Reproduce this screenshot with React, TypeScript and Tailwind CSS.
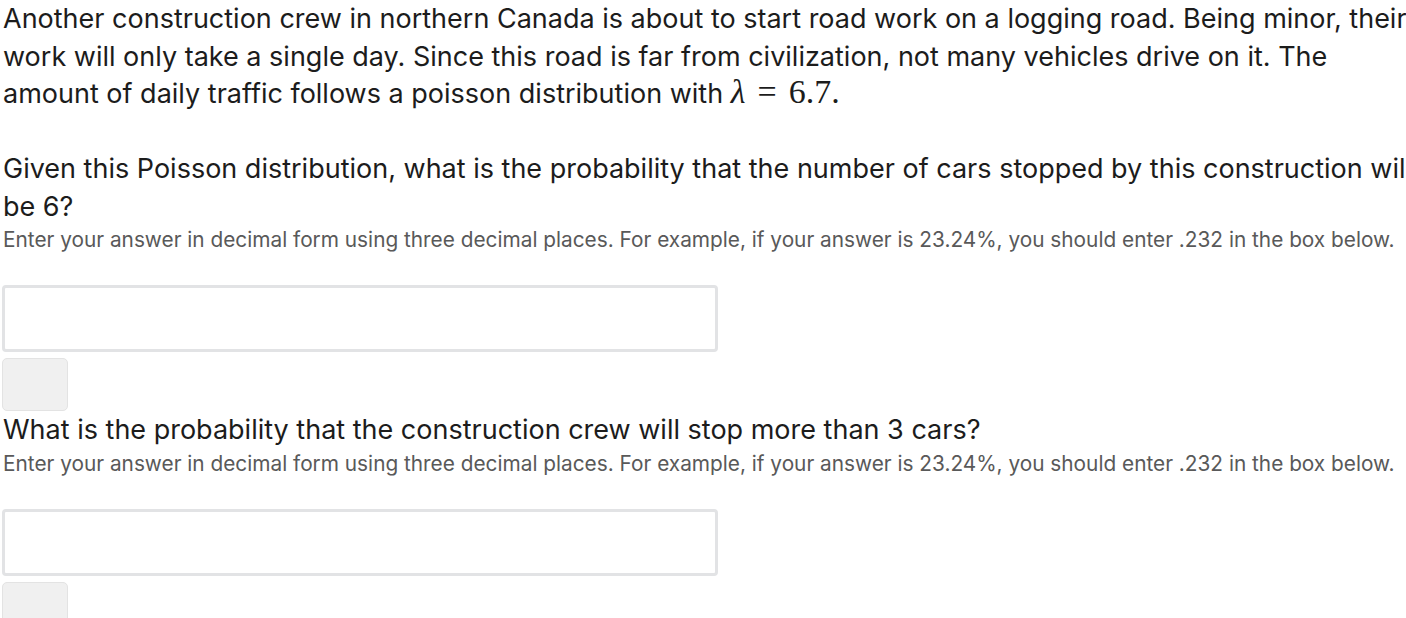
import React from 'react';

const hint =
    'Enter your answer in decimal form using three decimal places. For example, if your answer is 23.24%, you should enter .232 in the box below.';

// --- Answer block: text input + small grey submit button ---
const AnswerBox: React.FC = () => (
    <div className="flex flex-col">
        <input
            type="text"
            className="mt-[30px] ml-[-1px] h-[67px] w-[716px] rounded-[4px] border-[3px] border-[#e2e3e5] bg-white px-3 text-[20px] outline-none"
        />
        <button className="mt-[6px] ml-[-1px] h-[53px] w-[66px] rounded-[5px] border border-[#e3e3e3] bg-[#f0f0f0]"></button>
    </div>
);

const Question: React.FC<{ children: React.ReactNode }> = ({ children }) => (
    <div>
        <p className="text-[27px] leading-[37.5px] text-[#1c1c1c]">{children}</p>
        <p className="whitespace-nowrap text-[20.8px] leading-[30px] text-[#595959]">{hint}</p>
        <AnswerBox />
    </div>
);

export default function App() {
    return (
        <div className="h-[618px] w-[1406px] overflow-hidden bg-white">
            <div className="w-[1420px] pl-[3px] font-['Inter','Noto_Sans',sans-serif]">
                <p className="text-[27px] leading-[37.5px] text-[#1c1c1c]">
                    Another construction crew in northern Canada is about to start road work on a logging road. Being minor, their work will only take a single day. Since this road is far from civilization, not many vehicles drive on it. The amount of daily traffic follows a poisson distribution with{' '}
                    <span className="font-['Liberation_Serif','DejaVu_Serif',serif] text-[34px] leading-none">
                        <i className="mr-[12px]">λ</i>=<span className="ml-[12px]">6.7.</span>
                    </span>
                </p>
                <div className="h-[37.5px]"></div>
                <Question>
                    Given this Poisson distribution, what is the probability that the number of cars stopped by this construction will be 6?
                </Question>
                <Question>What is the probability that the construction crew will stop more than 3 cars?</Question>
            </div>
        </div>
    );
}
